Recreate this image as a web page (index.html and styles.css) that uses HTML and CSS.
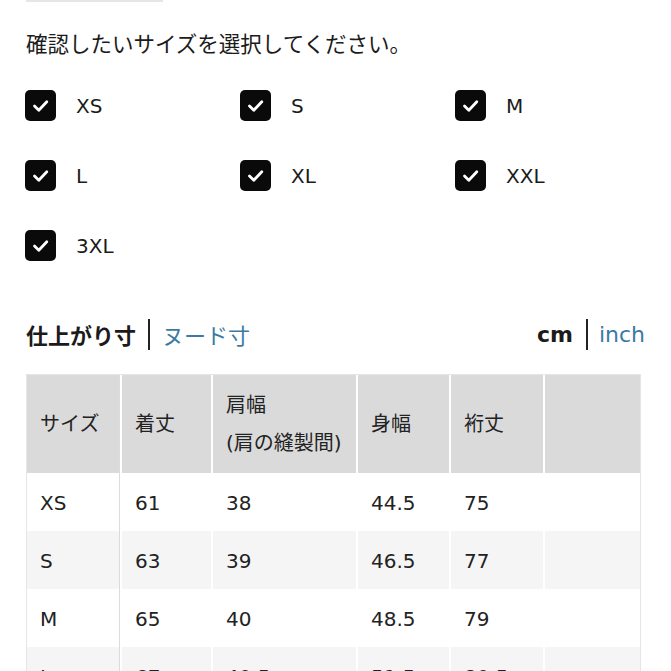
FILE: index.html
```html
<!DOCTYPE html>
<html lang="ja">
<head>
  <meta charset="UTF-8" />
  <meta name="viewport" content="width=device-width, initial-scale=1.0" />
  <title>サイズ表</title>
  <link rel="stylesheet" href="styles.css">
</head>
<body>
  <div class="top-line"></div>

  <p class="lead">確認したいサイズを選択してください。</p>

  <div class="sizes">
    <label class="size-item"><span class="box"><svg viewBox="0 0 31 31"><path d="M9.5 16 L13.8 20.2 L21.8 11.8" /></svg></span>XS</label>
    <label class="size-item"><span class="box"><svg viewBox="0 0 31 31"><path d="M9.5 16 L13.8 20.2 L21.8 11.8" /></svg></span>S</label>
    <label class="size-item"><span class="box"><svg viewBox="0 0 31 31"><path d="M9.5 16 L13.8 20.2 L21.8 11.8" /></svg></span>M</label>
    <label class="size-item"><span class="box"><svg viewBox="0 0 31 31"><path d="M9.5 16 L13.8 20.2 L21.8 11.8" /></svg></span>L</label>
    <label class="size-item"><span class="box"><svg viewBox="0 0 31 31"><path d="M9.5 16 L13.8 20.2 L21.8 11.8" /></svg></span>XL</label>
    <label class="size-item"><span class="box"><svg viewBox="0 0 31 31"><path d="M9.5 16 L13.8 20.2 L21.8 11.8" /></svg></span>XXL</label>
    <label class="size-item"><span class="box"><svg viewBox="0 0 31 31"><path d="M9.5 16 L13.8 20.2 L21.8 11.8" /></svg></span>3XL</label>
  </div>

  <div class="switch-bar">
    <div class="switch">
      <span class="active">仕上がり寸</span>
      <span class="sep"></span>
      <a class="link">ヌード寸</a>
    </div>
    <div class="switch">
      <span class="active">cm</span>
      <span class="sep sep-unit"></span>
      <a class="link">inch</a>
    </div>
  </div>

  <div class="table-wrap">
    <table class="size-table">
      <thead>
        <tr>
          <th class="c1">サイズ</th>
          <th class="c2">着丈</th>
          <th class="c3">肩幅<br>(肩の縫製間)</th>
          <th class="c4">身幅</th>
          <th class="c5">裄丈</th>
          <th class="c6"></th>
        </tr>
      </thead>
      <tbody>
        <tr><td class="c1">XS</td><td>61</td><td>38</td><td>44.5</td><td>75</td><td></td></tr>
        <tr><td class="c1">S</td><td>63</td><td>39</td><td>46.5</td><td>77</td><td></td></tr>
        <tr><td class="c1">M</td><td>65</td><td>40</td><td>48.5</td><td>79</td><td></td></tr>
        <tr><td class="c1">L</td><td>67</td><td>40.5</td><td>51.5</td><td>80.5</td><td></td></tr>
      </tbody>
    </table>
  </div>
</body>
</html>
```

FILE: styles.css
```css
body {
  margin: 0;
  padding: 0 26px;
  font-family: "DejaVu Sans", "Noto Sans CJK JP", sans-serif;
  color: #1b1b1b;
  background: #fff;
  overflow: hidden;
}
.top-line {
  width: 137px;
  height: 2px;
  background: #e6e6e6;
}
.lead {
  margin: 26px 0 0;
  font-family: "Noto Sans CJK JP", sans-serif;
  font-size: 21.5px;
  line-height: 30px;
}
.sizes {
  display: grid;
  grid-template-columns: repeat(3, 215px);
  row-gap: 39px;
  margin-top: 32px;
}
.size-item {
  display: flex;
  align-items: center;
  gap: 20px;
  font-size: 20px;
  height: 31px;
}
.box {
  width: 31px;
  height: 31px;
  border-radius: 5px;
  background: #0a0a0a;
  display: block;
  margin-left: -1px;
}
.box svg {
  display: block;
  width: 31px;
  height: 31px;
}
.box path {
  fill: none;
  stroke: #fff;
  stroke-width: 2.8;
  stroke-linecap: round;
  stroke-linejoin: round;
}
.switch-bar {
  display: flex;
  justify-content: space-between;
  align-items: center;
  margin-top: 57px;
  height: 32px;
}
.switch {
  display: flex;
  align-items: center;
  font-size: 22px;
}
.switch .active {
  font-weight: bold;
  color: #1b1b1b;
}
.sep {
  width: 2px;
  height: 31px;
  background: #222;
  margin: 0 12px 0 12px;
}
.sep-unit {
  margin: 0 11px 0 13px;
}
.link {
  color: #3a7aa3;
}
.table-wrap {
  margin-top: 24px;
  width: 613px;
  border: 1px solid #e6e6e6;
  border-bottom: none;
}
.size-table {
  width: 100%;
  border-collapse: separate;
  border-spacing: 0;
  table-layout: fixed;
  font-size: 20px;
  color: #222;
}
.size-table th,
.size-table td {
  box-sizing: border-box;
  text-align: left;
  font-weight: normal;
  padding: 10px 0 10px 13px;
  line-height: 38px;
  vertical-align: middle;
  white-space: nowrap;
  border-left: 2px solid #fff;
}
.size-table th {
  background: #dadada;
  padding-top: 11px;
  padding-bottom: 11px;
}
.size-table tbody td {
  padding-top: 11px;
  padding-bottom: 9px;
}
.size-table .c1 {
  border-left: none;
  border-right: 1px solid #dcdcdc;
}
.size-table .c1 { width: 93px; }
.size-table .c2 { width: 91px; }
.size-table .c3 { width: 145px; }
.size-table .c4 { width: 93px; }
.size-table .c5 { width: 94px; }
.size-table .c6 { width: 97px; }
.size-table tbody tr:nth-child(even) td {
  background: #f5f5f5;
}
```
